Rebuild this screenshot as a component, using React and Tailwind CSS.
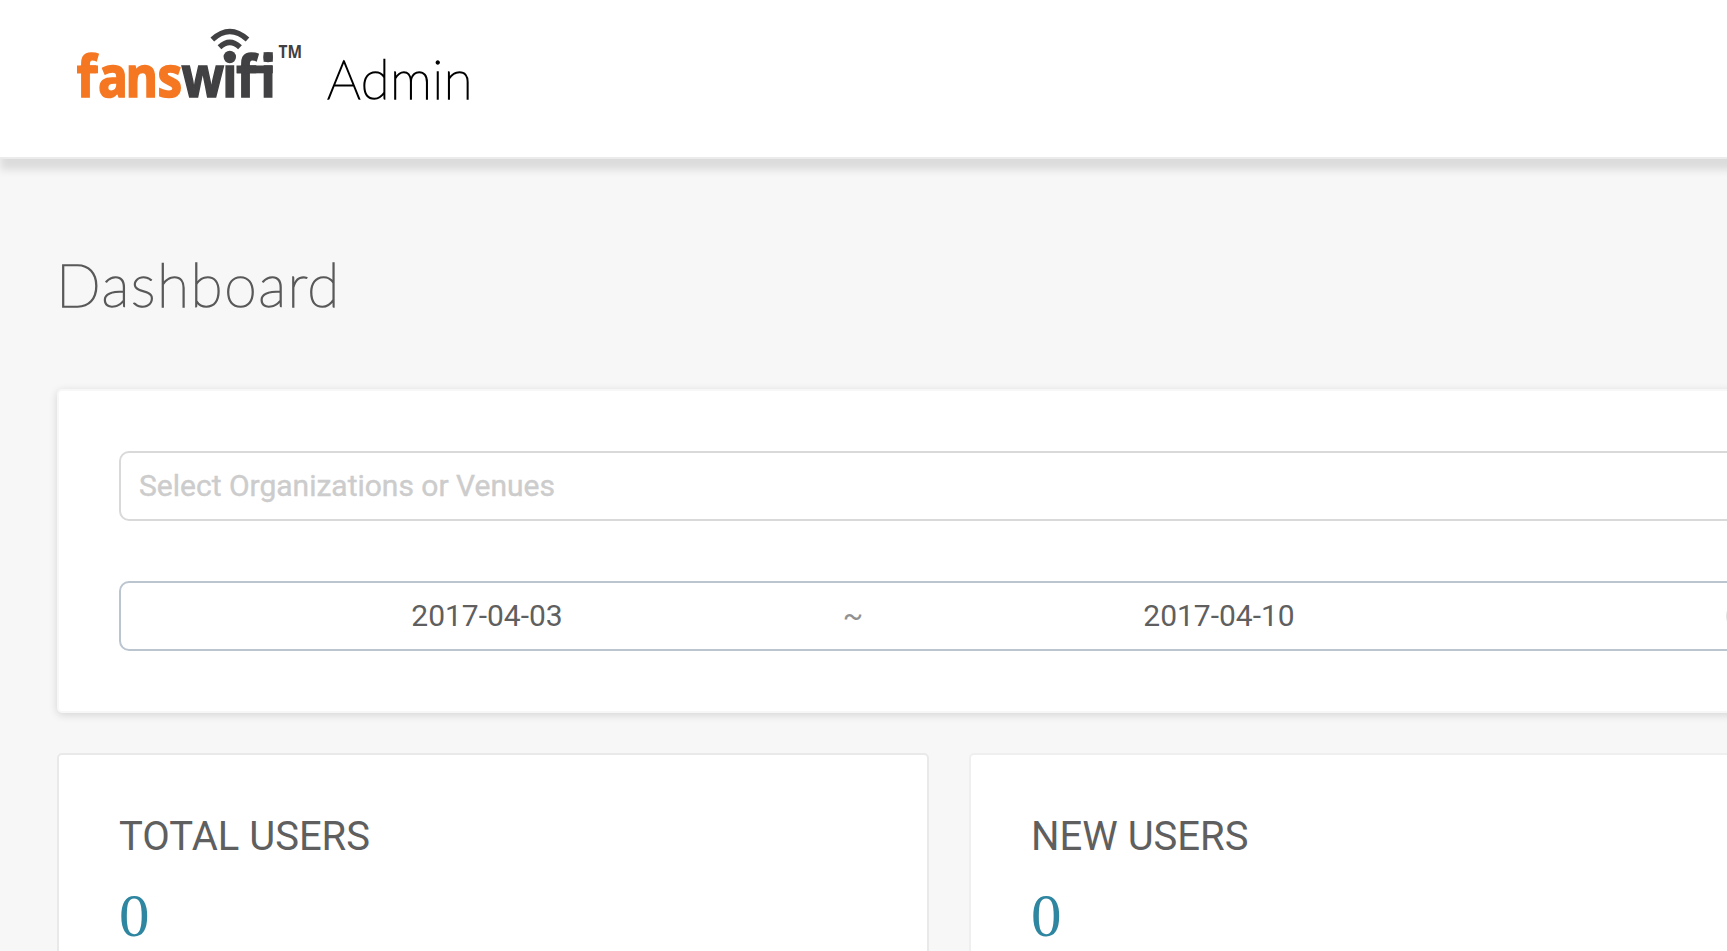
import React from "react";

function Logo() {
  return (
    <svg width="250" height="110" viewBox="60 10 250 110" className="shrink-0" role="img" aria-label="fanswifi">
      <g fontFamily="'Open Sans', sans-serif" fontWeight="700" fontSize="57">
        <g strokeWidth="1.6" strokeLinejoin="miter">
          <text transform="translate(0 96.8) scale(.87 1)" x="88.3 112.7 144.3 181" fill="#f57722" stroke="#f57722">fans</text>
          <text transform="translate(0 96.8) scale(.87 1)" x="208.6 255.4 272.2 299.5" fill="#414042" stroke="#414042">wifi</text>
        </g>
        <text x="278.5" y="58.4" fontSize="17.8" textLength="23.5" lengthAdjust="spacingAndGlyphs" fill="#414042">TM</text>
      </g>
      <rect x="77" y="65.5" width="21" height="7.8" fill="#f57722" />
      <rect x="236.5" y="65.5" width="36.3" height="7.8" fill="#414042" />
      <circle cx="229.8" cy="57" r="6.2" fill="#414042" />
      <rect x="263.6" y="52.2" width="9.2" height="9.6" fill="#414042" />
      <g fill="none" stroke="#414042" strokeWidth="5.4">
        <path d="M212.3 39.5 Q229.8 23.5 247.5 39.5" />
        <path d="M219.5 47.2 Q229.8 37.5 240 47.2" />
      </g>
    </svg>
  );
}

function StatCard({ title, value, className }) {
  return (
    <section className={`shrink-0 rounded-[5px] border-2 bg-white px-[60px] pt-[60px] ${className}`}>
      <h2 className="text-[40px] leading-[44px] text-[#5f5f5f]">{title}</h2>
      <p className="mt-[21px] font-['Liberation_Serif',serif] text-[61px] leading-[72px] text-[#2e86a0]">{value}</p>
    </section>
  );
}

export default function App() {
  return (
    <div className="flex h-screen w-full flex-col overflow-hidden bg-[#f7f7f7] font-['Roboto',sans-serif]">
      <header className="relative flex h-[159px] w-[1782px] shrink-0 items-start border-b-2 border-[#ebebeb] bg-white pt-[10px] pl-[60px] shadow-[0_11px_8px_rgba(0,0,0,0.11)]">
        <Logo />
        <span className="mt-[37px] ml-[17px] font-['Lato',sans-serif] text-[53px] leading-[64px] font-thin tracking-[0.5px] text-black [-webkit-text-stroke:1.4px_#000]">Admin</span>
      </header>
      <main className="flex flex-1 flex-col pt-[91px] pl-[57px]">
        <h1 className="-ml-px h-[139px] shrink-0 font-['Lato',sans-serif] text-[59px] leading-[70px] font-thin tracking-[1.5px] text-[#595959] [-webkit-text-stroke:1.5px_#595959]">Dashboard</h1>
        <section className="flex h-[324px] w-[1782px] shrink-0 flex-col gap-[60px] rounded-[5px] border-2 border-[#f7f7f7] bg-white px-[60px] pt-[60px] shadow-[0_2px_8px_rgba(0,0,0,0.14)]">
          <div className="flex h-[70px] items-center rounded-[10px] border-2 border-[#d9d9d9] px-[18px] text-[30px] leading-[44px] text-[#cccccc] [-webkit-text-stroke:0.4px_#cccccc]">
            Select Organizations or Venues
          </div>
          <div className="flex h-[70px] items-center rounded-[10px] border-2 border-[#bbc5d0] pl-[14px] text-[30px] leading-[44px] text-[#5f5f5f]">
            <span className="w-[704px] shrink-0 text-center">2017-04-03</span>
            <span className="w-[28px] shrink-0 text-center text-[#919191]">~</span>
            <span className="w-[704px] shrink-0 text-center">2017-04-10</span>
            <span className="ml-[155px] size-[28px] shrink-0 rounded-full bg-[#e2e2e2]" />
          </div>
        </section>
        <div className="mt-[40px] flex h-[320px] shrink-0 gap-[40px]">
          <StatCard title="TOTAL USERS" value="0" className="w-[872px] border-[#e9e9e9]" />
          <StatCard title="NEW USERS" value="0" className="w-[872px] border-[#efefef]" />
        </div>
      </main>
    </div>
  );
}
